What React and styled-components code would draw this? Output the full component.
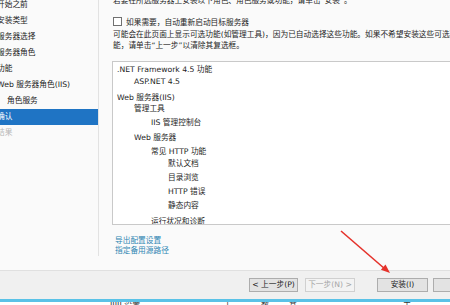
import React from "react";
import styled, { createGlobalStyle } from "styled-components";

const GlobalStyle = createGlobalStyle`
  html, body {
    margin: 0;
    padding: 0;
    background: #fafafa;
    overflow: hidden;
  }
  body {
    font-family: "DejaVu Sans", "Noto Sans CJK SC", sans-serif;
  }
`;

const Screen = styled.div`
  position: relative;
  width: 450px;
  height: 305px;
  overflow: hidden;
  display: flex;
  flex-direction: column;
  background: #fafafa;
  color: #1e1e1e;
  font-size: 7.7px;
`;

const Main = styled.div`
  display: flex;
  height: 270px;
  width: 560px;
  flex-shrink: 0;
`;

const Nav = styled.div`
  width: 98px;
  height: 256px;
  flex-shrink: 0;
  border-right: 1px solid #e2e2e2;
  overflow: hidden;
`;

const NavList = styled.ul`
  list-style: none;
  margin: -3px 0 0 0;
  padding: 0;
`;

const NavItem = styled.li`
  height: 16px;
  line-height: 16px;
  white-space: nowrap;
  text-indent: ${props => (props.sub ? 7 : -3)}px;
  background: ${props => (props.active ? "#1f74c4" : "transparent")};
  color: ${props =>
    props.active ? "#ffffff" : props.disabled ? "#b8b8b8" : "#222222"};
`;

const Content = styled.div`
  flex: 1;
  min-width: 0;
  padding-left: 13px;
  display: flex;
  flex-direction: column;
`;

const TextLine = styled.div`
  margin-top: -5px;
  line-height: 11px;
  white-space: nowrap;
  padding-left: 1px;
`;

const CheckRow = styled.label`
  display: flex;
  align-items: center;
  gap: 4px;
  height: 11px;
  margin-top: 10px;
  padding-left: 1px;
  white-space: nowrap;
`;

const CheckBox = styled.span`
  display: inline-block;
  width: 9px;
  height: 9px;
  box-sizing: border-box;
  border: 1px solid #707070;
  background: #ffffff;
`;

const Para = styled.div`
  margin-top: 2px;
  line-height: 11px;
  white-space: nowrap;
  padding-left: 1px;
`;

const TreeBox = styled.div`
  margin-top: 10px;
  width: 420px;
  height: 164px;
  box-sizing: border-box;
  border: 1px solid #c9c9c9;
  background: #ffffff;
  padding: 2px 0 0 4px;
  overflow: hidden;
`;

const TreeRow = styled.div`
  line-height: 12px;
  white-space: nowrap;
  padding-left: ${props => props.level * 17}px;
  margin-top: ${props => props.gap}px;
`;

const Links = styled.div`
  margin-top: 11px;
  padding-left: 3px;
  display: flex;
  flex-direction: column;
`;

const LinkText = styled.a`
  line-height: 10px;
  color: #2f86b3;
  text-decoration: none;
  white-space: nowrap;
`;

const Footer = styled.div`
  height: 29px;
  box-sizing: border-box;
  border-top: 1px solid #e0e0e0;
  background: #f0f0f0;
  padding: 7px 0 0 249px;
  display: flex;
  align-items: flex-start;
  width: 560px;
`;

const Button = styled.button`
  flex-shrink: 0;
  width: ${props => props.w}px;
  height: 14px;
  margin: 0 0 0 ${props => props.lead}px;
  padding: 0;
  box-sizing: border-box;
  font-family: inherit;
  font-size: 7.7px;
  line-height: 12px;
  color: ${props => (props.disabled ? "#a6a6a6" : "#1e1e1e")};
  background: ${props => (props.disabled ? "#f3f3f3" : "#e3e3e3")};
  border: 1px solid ${props => (props.disabled ? "#d0d0d0" : "#adadad")};
`;

const TaskLine = styled.div`
  height: 3px;
  background: #5ac2e7;
  flex-shrink: 0;
`;

const TaskStrip = styled.div`
  height: 3px;
  background: #ffffff;
  overflow: hidden;
  display: flex;
  padding-left: 110px;
  gap: 6px;
  font-size: 8px;
  line-height: 8px;
  color: #333333;
  white-space: nowrap;
`;

const TaskWord = styled.span`
  margin-left: ${props => props.lead || 0}px;
`;

const Arrow = styled.svg`
  position: absolute;
  left: 0;
  top: 0;
  pointer-events: none;
`;

const navItems = [
  { label: "开始之前" },
  { label: "安装类型" },
  { label: "服务器选择" },
  { label: "服务器角色" },
  { label: "功能" },
  { label: "Web 服务器角色(IIS)" },
  { label: "角色服务", sub: true },
  { label: "确认", active: true },
  { label: "结果", disabled: true },
];

const treeItems = [
  { label: ".NET Framework 4.5 功能", level: 0, gap: 0 },
  { label: "ASP.NET 4.5", level: 1, gap: 0 },
  { label: "Web 服务器(IIS)", level: 0, gap: 4 },
  { label: "管理工具", level: 1, gap: -1 },
  { label: "IIS 管理控制台", level: 2, gap: 2 },
  { label: "Web 服务器", level: 1, gap: 3 },
  { label: "常见 HTTP 功能", level: 2, gap: 2 },
  { label: "默认文档", level: 3, gap: 0 },
  { label: "目录浏览", level: 3, gap: 2 },
  { label: "HTTP 错误", level: 3, gap: 2 },
  { label: "静态内容", level: 3, gap: 2 },
  { label: "运行状况和诊断", level: 2, gap: 4 },
];

export default function App() {
  return (
    <Screen>
      <GlobalStyle />
      <Main>
        <Nav>
          <NavList>
            {navItems.map(item => (
              <NavItem
                key={item.label}
                sub={item.sub}
                active={item.active}
                disabled={item.disabled}
              >
                {item.label}
              </NavItem>
            ))}
          </NavList>
        </Nav>
        <Content>
          <TextLine>若要在所选服务器上安装以下角色、角色服务或功能，请单击“安装”。</TextLine>
          <CheckRow>
            <CheckBox />
            如果需要，自动重新启动目标服务器
          </CheckRow>
          <Para>
            可能会在此页面上显示可选功能(如管理工具)，因为已自动选择这些功能。如果不希望安装这些可选功
            <br />
            能，请单击“上一步”以清除其复选框。
          </Para>
          <TreeBox>
            {treeItems.map(item => (
              <TreeRow key={item.label} level={item.level} gap={item.gap}>
                {item.label}
              </TreeRow>
            ))}
          </TreeBox>
          <Links>
            <LinkText href="#">导出配置设置</LinkText>
            <LinkText href="#">指定备用源路径</LinkText>
          </Links>
        </Content>
      </Main>
      <Footer>
        <Button w={49} lead={0}>&lt; 上一步(P)</Button>
        <Button w={50} lead={7} disabled>下一步(N) &gt;</Button>
        <Button w={51} lead={22}>安装(I)</Button>
        <Button w={51} lead={5}>取消</Button>
      </Footer>
      <TaskLine />
      <TaskStrip>
        <TaskWord>IIIII 设置</TaskWord>
        <TaskWord lead={80}>|</TaskWord>
        <TaskWord lead={26}>数</TaskWord>
        <TaskWord lead={14}>其</TaskWord>
        <TaskWord lead={100}>工</TaskWord>
        <TaskWord lead={34}>具</TaskWord>
      </TaskStrip>
      <Arrow width="450" height="305" viewBox="0 0 450 305">
        <line
          x1="341"
          y1="231"
          x2="385"
          y2="269"
          stroke="#e5322b"
          strokeWidth="1.6"
        />
        <polygon points="390,273 380.9,269.7 385.5,264.5" fill="#e5322b" />
      </Arrow>
    </Screen>
  );
}
